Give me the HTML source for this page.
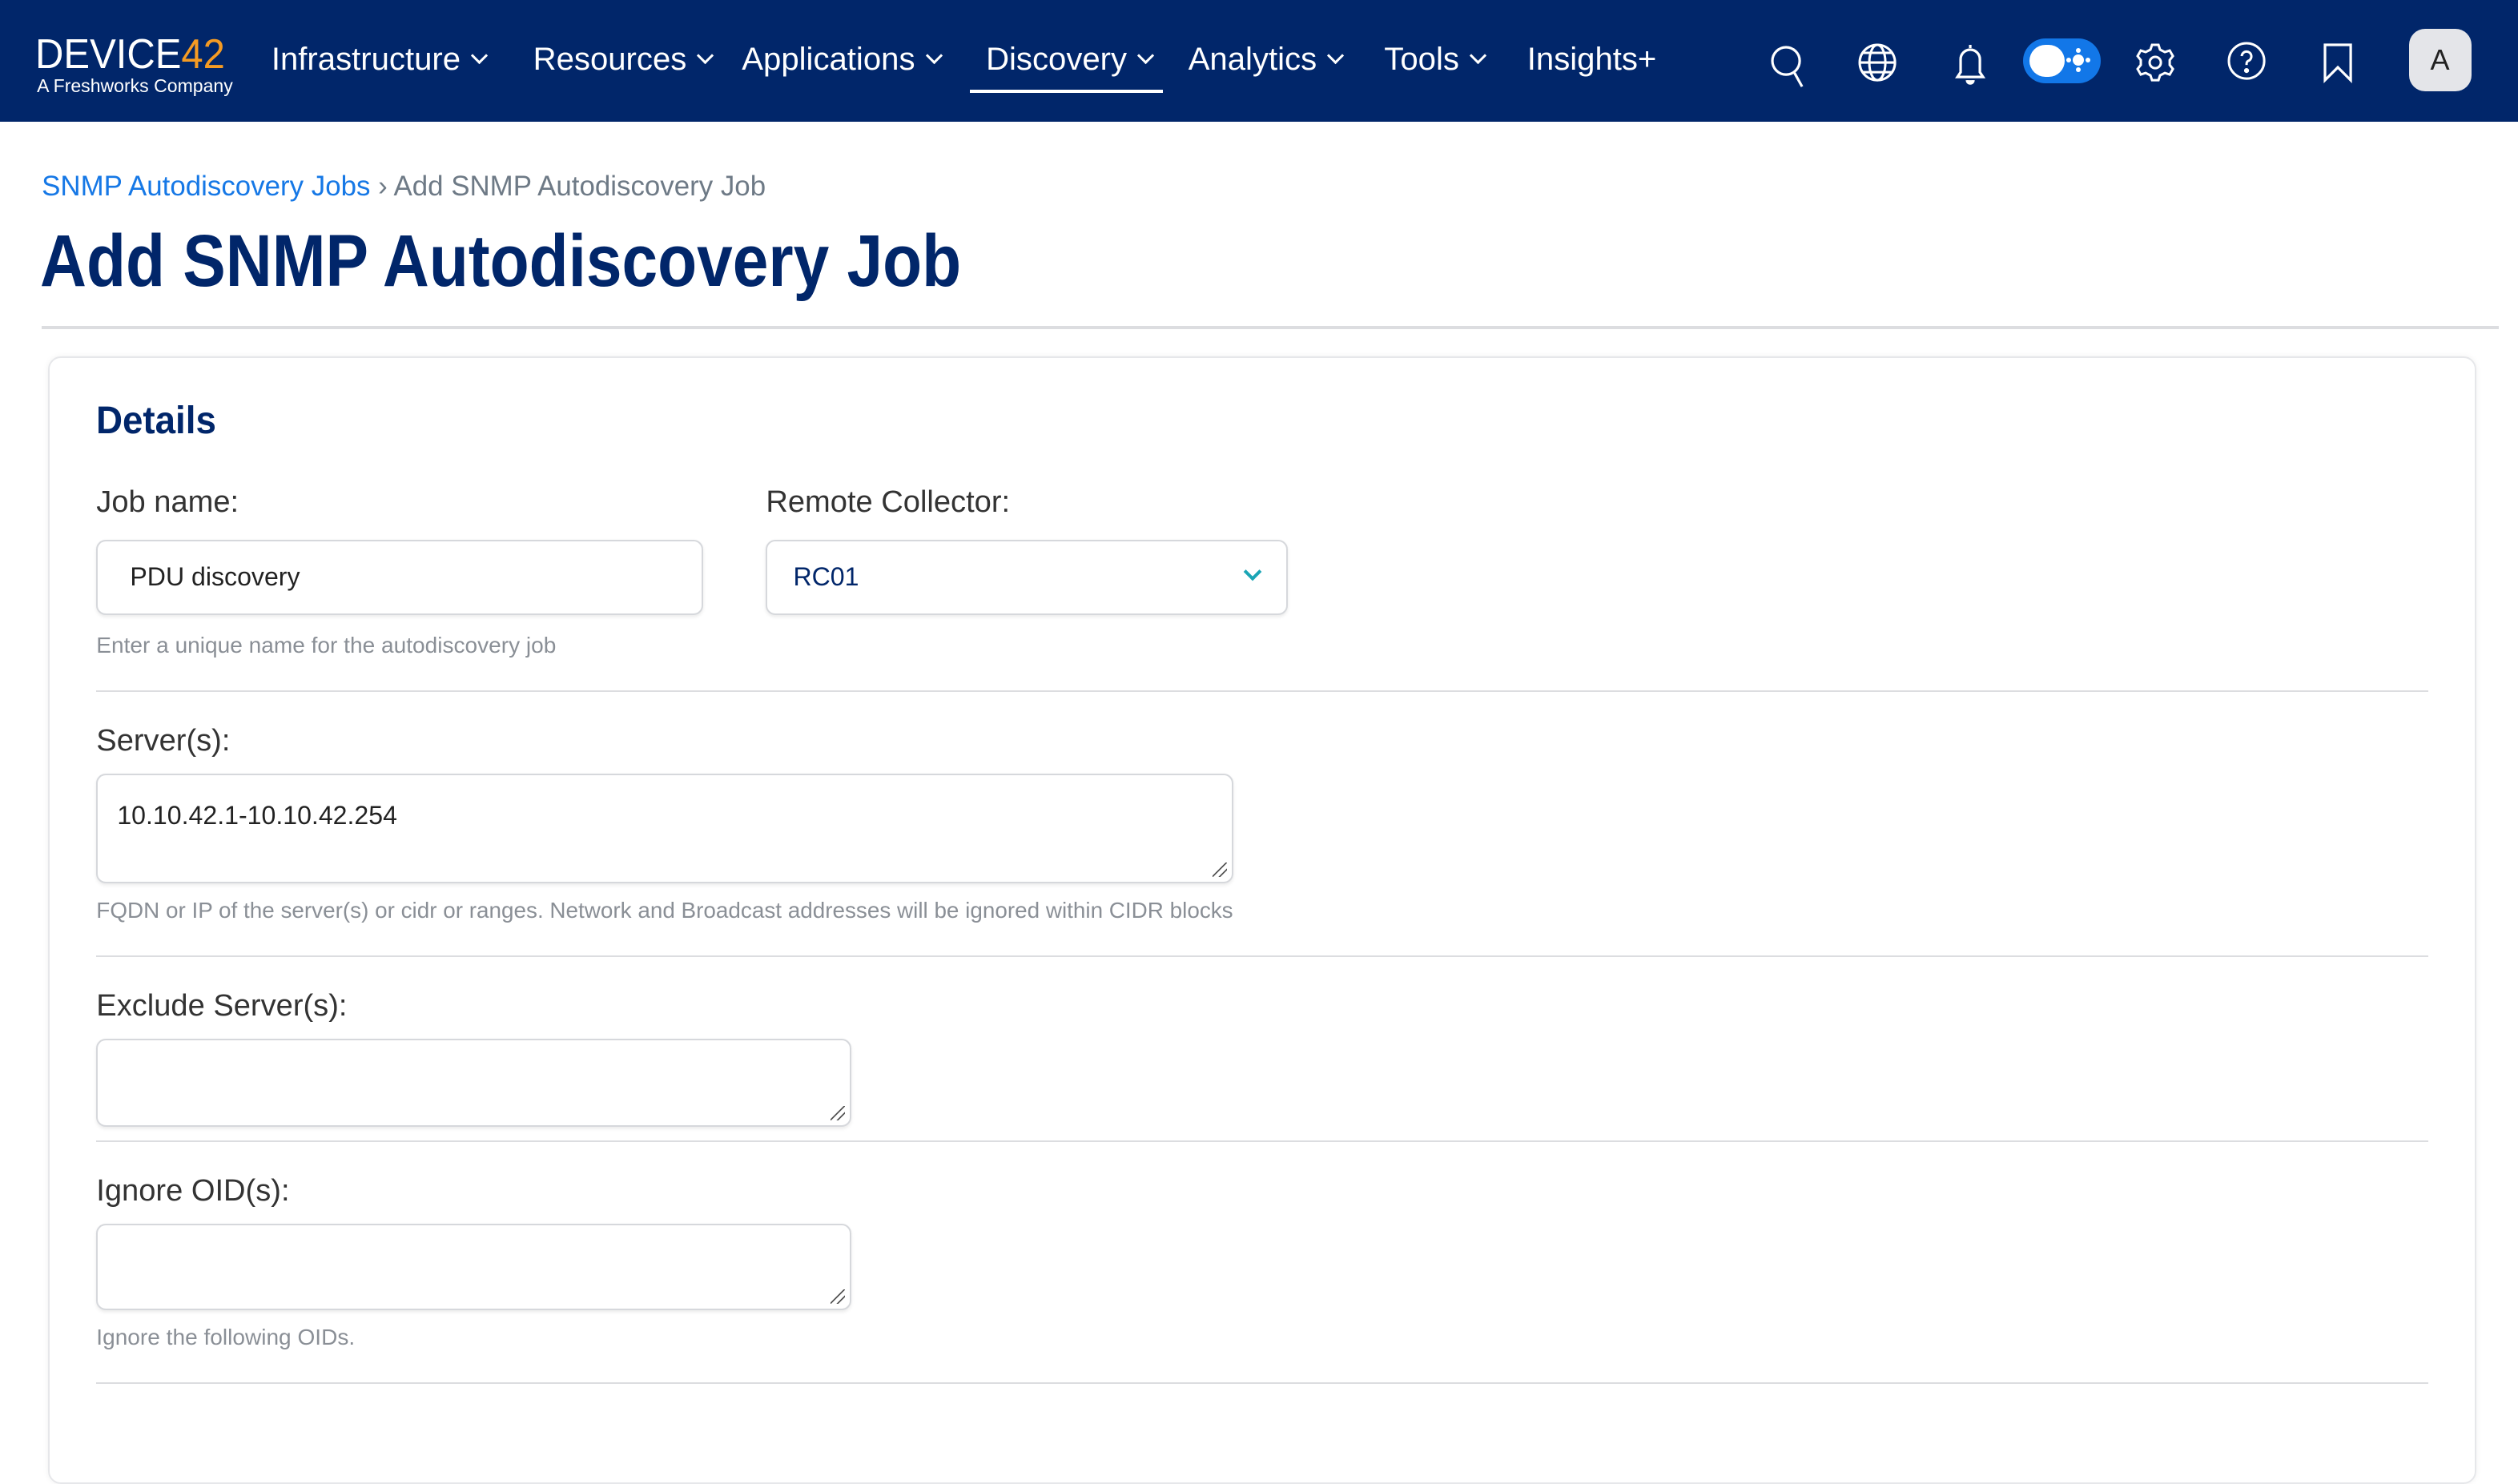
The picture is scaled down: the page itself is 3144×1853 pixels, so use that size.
<!DOCTYPE html>
<html><head><meta charset="utf-8"><style>
html,body{margin:0;padding:0;background:#fff;}
body{width:1568px;height:874px;zoom:2.005;overflow:hidden;font-family:"Liberation Sans",sans-serif;position:relative;}
.nav{position:absolute;left:0;top:0;width:1568px;height:76px;background:#01266a;}
.abs{position:absolute;}
.nav .it{position:absolute;top:26px;color:#fff;font-size:20px;}
.chev{display:inline-block;width:6px;height:6px;border-right:1.5px solid #fff;border-bottom:1.5px solid #fff;transform:rotate(45deg);margin-left:8px;position:relative;top:-5px;}
.lbl{position:absolute;font-size:19px;color:#333;}
.help{position:absolute;font-size:14px;color:#8a8f96;}
.box{position:absolute;border:1px solid #d6d8dc;border-radius:6px;background:#fff;box-shadow:0 1px 2px rgba(0,0,0,.08);}
.hr{position:absolute;left:60px;width:1452px;height:1px;background:#dcdde0;}
.grip{position:absolute;right:3px;bottom:3px;width:9px;height:9px;background:linear-gradient(135deg,transparent 45%,#555 45%,#555 52%,transparent 52%,transparent 70%,#555 70%,#555 77%,transparent 77%);}
</style></head><body>
<div class="nav">
 <div class="abs" style="left:22px;top:19px;font-size:26px;color:#fff;letter-spacing:0px;line-height:30px;transform:scaleX(0.94);transform-origin:left">DEVICE<span style="color:#f59b23">42</span></div>
 <div class="abs" style="left:23px;top:47px;font-size:11.5px;color:#fff">A Freshworks Company</div>
 <div class="it" style="left:169px">Infrastructure<span class="chev"></span></div>
 <div class="it" style="left:332px">Resources<span class="chev"></span></div>
 <div class="it" style="left:462px">Applications<span class="chev"></span></div>
 <div class="it" style="left:614px">Discovery<span class="chev"></span></div>
 <div class="abs" style="left:604px;top:56px;width:120px;height:2px;background:#fff"></div>
 <div class="it" style="left:740px">Analytics<span class="chev"></span></div>
 <div class="it" style="left:862px">Tools<span class="chev"></span></div>
 <div class="it" style="left:951px">Insights+</div>
 <svg class="abs" style="left:1100px;top:26px" width="30" height="30" viewBox="0 0 30 30" fill="none" stroke="#fff" stroke-width="1.6"><circle cx="12" cy="12" r="8.5"/><path d="M17 19l5 9"/></svg>
 <svg class="abs" style="left:1156px;top:26px" width="26" height="26" viewBox="0 0 26 26" fill="none" stroke="#fff" stroke-width="1.5"><circle cx="13" cy="13" r="11"/><ellipse cx="13" cy="13" rx="5" ry="11"/><path d="M2 13h22M4 7h18M4 19h18"/></svg>
 <svg class="abs" style="left:1214px;top:25px" width="26" height="28" viewBox="0 0 26 28" fill="none" stroke="#fff" stroke-width="1.6"><path d="M13 3v2M7 20V12a6 6 0 0 1 12 0v8l2 3H5z"/><path d="M11 25a2 2 0 0 0 4 0" fill="#fff"/></svg>
 <div class="abs" style="left:1260px;top:24px;width:48px;height:28px;border-radius:14px;background:#1277e8"></div>
 <div class="abs" style="left:1264px;top:28px;width:22px;height:20px;border-radius:10px;background:#fff"></div>
 <div class="abs" style="left:1291px;top:34px;width:7px;height:7px;border-radius:50%;background:#fff;box-shadow:0 -6px 0 -2px #fff,0 6px 0 -2px #fff,-6px 0 0 -2px #fff,6px 0 0 -2px #fff"></div>
 <svg class="abs" style="left:1328px;top:25px" width="28" height="28" viewBox="0 0 28 28" fill="none" stroke="#fff" stroke-width="1.5"><path d="M12 3h4l1 3 3 1.5 3-1 2 3.5-2 2.5v3l2 2.5-2 3.5-3-1-3 1.5-1 3h-4l-1-3-3-1.5-3 1-2-3.5 2-2.5v-3l-2-2.5 2-3.5 3 1 3-1.5z"/><circle cx="14" cy="14" r="3.5"/></svg>
 <svg class="abs" style="left:1386px;top:25px" width="26" height="26" viewBox="0 0 26 26" fill="none" stroke="#fff" stroke-width="1.5"><circle cx="13" cy="13" r="11"/><path d="M10 10a3 3 0 1 1 4 3c-1 .6-1 1.2-1 2.5"/><circle cx="13" cy="19" r=".8" fill="#fff"/></svg>
 <svg class="abs" style="left:1446px;top:26px" width="20" height="26" viewBox="0 0 20 26" fill="none" stroke="#fff" stroke-width="1.6"><path d="M2 2h16v22l-8-8-8 8z"/></svg>
 <div class="abs" style="left:1500px;top:18px;width:39px;height:39px;border-radius:10px;background:#e4e5e9;color:#222;font-size:18px;text-align:center;line-height:39px">A</div>
</div>
<div class="abs" style="left:26px;top:106px;font-size:17.4px"><span style="color:#1678e6">SNMP Autodiscovery Jobs</span><span style="color:#6e7a86"> › Add SNMP Autodiscovery Job</span></div>
<div class="abs" style="left:25px;top:136px;font-size:46px;font-weight:bold;color:#01266a;transform:scaleX(0.87);transform-origin:left;white-space:nowrap">Add SNMP Autodiscovery Job</div>
<div class="abs" style="left:26px;top:203px;width:1530px;height:2px;background:#dcdde0"></div>
<div class="abs" style="left:30px;top:222px;width:1510px;height:700px;border:1px solid #e6e7ea;border-radius:8px;box-shadow:0 0 4px rgba(0,0,0,.06)"></div>
<div class="abs" style="left:60px;top:248px;font-size:24px;color:#01266a;font-weight:bold;transform:scaleX(0.95);transform-origin:left">Details</div>
<div class="lbl" style="left:60px;top:302px">Job name:</div>
<div class="lbl" style="left:477px;top:302px">Remote Collector:</div>
<div class="box" style="left:60px;top:336px;width:376px;height:45px"><span class="abs" style="left:20px;top:13px;font-size:16px;color:#222">PDU discovery</span></div>
<div class="box" style="left:477px;top:336px;width:323px;height:45px"><span class="abs" style="left:16px;top:13px;font-size:16px;color:#01266a">RC01</span><span class="abs" style="left:298px;top:15px;width:6px;height:6px;border-right:2px solid #1aa5b5;border-bottom:2px solid #1aa5b5;transform:rotate(45deg)"></span></div>
<div class="help" style="left:60px;top:394px">Enter a unique name for the autodiscovery job</div>
<div class="hr" style="top:430px"></div>
<div class="lbl" style="left:60px;top:451px">Server(s):</div>
<div class="box" style="left:60px;top:482px;width:706px;height:66px"><span class="abs" style="left:12px;top:16px;font-size:16px;color:#222">10.10.42.1-10.10.42.254</span><div class="grip"></div></div>
<div class="help" style="left:60px;top:559px;font-size:13.9px">FQDN or IP of the server(s) or cidr or ranges. Network and Broadcast addresses will be ignored within CIDR blocks</div>
<div class="hr" style="top:595px"></div>
<div class="lbl" style="left:60px;top:616px">Exclude Server(s):</div>
<div class="box" style="left:60px;top:647px;width:468px;height:53px"><div class="grip"></div></div>
<div class="hr" style="top:710px"></div>
<div class="lbl" style="left:60px;top:731px">Ignore OID(s):</div>
<div class="box" style="left:60px;top:762px;width:468px;height:52px"><div class="grip"></div></div>
<div class="help" style="left:60px;top:825px">Ignore the following OIDs.</div>
<div class="hr" style="top:861px"></div>
</body></html>
